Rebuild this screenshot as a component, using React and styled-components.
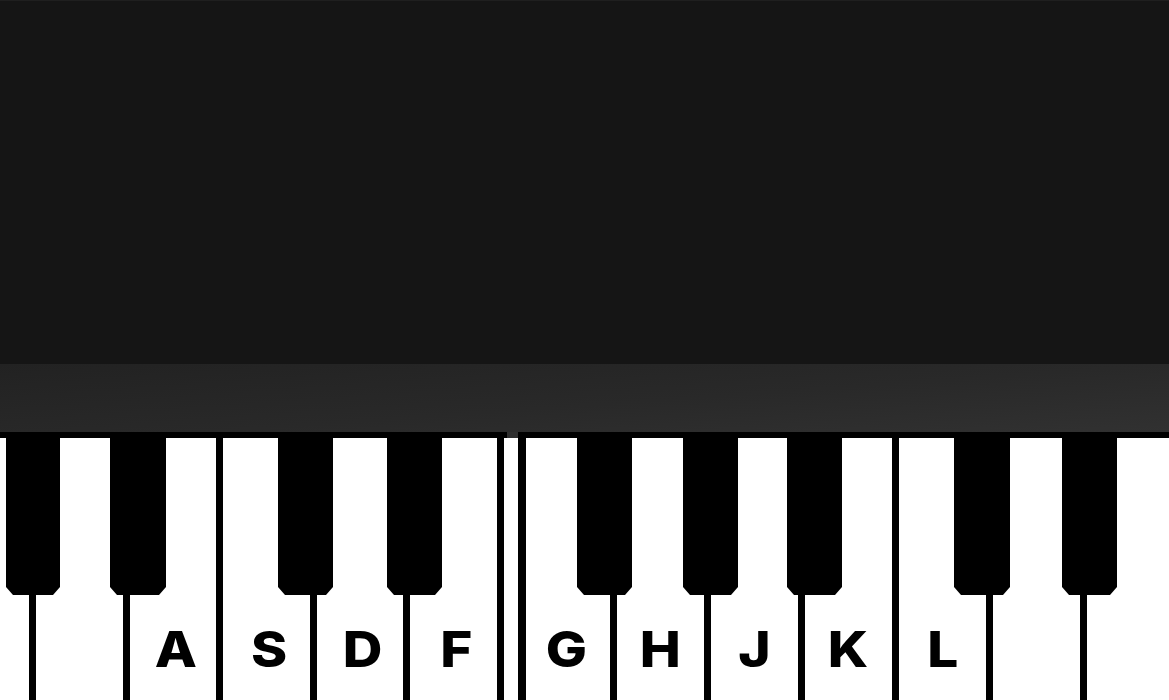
import React from 'react';
import styled, { createGlobalStyle } from 'styled-components';

// two keyboard halves, as in the reference: lower one cut on the left
const sections = [
    {
        id: 'left',
        offset: -57.6,
        keyWidth: 93.6,
        nudge: 6,
        edge: false,
        whites: ['', '', 'A', 'S', 'D', 'F'],
        blacks: [{ left: 6, width: 54 }, { left: 110, width: 56 }, { left: 278, width: 55 }, { left: 387, width: 55 }],
    },
    {
        id: 'right',
        offset: -3,
        keyWidth: 94,
        nudge: 0,
        edge: true,
        whites: ['G', 'H', 'J', 'K', 'L', '', ''],
        blacks: [{ left: 51, width: 55 }, { left: 157, width: 55 }, { left: 261, width: 55 }, { left: 428, width: 56 }, { left: 536, width: 55 }],
    },
];

const App = () => {
    return (
        <>
            <GlobalStyle />
            <Stage>
                <Lid />
                <Rail />
                <KeyRow>
                    {sections.map((section) => (
                        <Section key={section.id} $edge={section.edge}>
                            <WhiteStrip $offset={section.offset}>
                                {section.whites.map((label, index) => (
                                    <WhiteKey key={index} $width={section.keyWidth} $nudge={section.nudge}>
                                        {label && <KeyLabel>{label}</KeyLabel>}
                                    </WhiteKey>
                                ))}
                            </WhiteStrip>
                            {section.blacks.map((black, index) => (
                                <BlackKey key={index} $left={black.left} $width={black.width} />
                            ))}
                        </Section>
                    ))}
                </KeyRow>
            </Stage>
        </>
    );
};

const GlobalStyle = createGlobalStyle`
    html, body {
        margin: 0;
        padding: 0;
        background: #151515;
        overflow: hidden;
    }

    #root {
        width: 1169px;
        height: 700px;
    }
`;

const Stage = styled.div`
    display: flex;
    flex-direction: column;
    width: 1169px;
    height: 700px;
    overflow: hidden;
`;

const Lid = styled.div`
    height: 363px;
    flex-shrink: 0;
    background: #151515;
    border-top: 1px solid #1f1f1f;
`;

const Rail = styled.div`
    height: 68px;
    flex-shrink: 0;
    background: linear-gradient(176deg, #222222 0%, #292929 55%, #313131 100%);
`;

const KeyRow = styled.div`
    display: flex;
    gap: 11px;
    flex: 1;
    background: linear-gradient(#2f2f2f 0 6px, #ffffff 6px);
`;

const Section = styled.div`
    position: relative;
    overflow: hidden;
    background: #ffffff;
    border-top: 6px solid #000;
    border-left: ${(props) => (props.$edge ? '8px solid #000' : 'none')};
    width: ${(props) => (props.$edge ? 'auto' : '507px')};
    flex: ${(props) => (props.$edge ? '1' : 'none')};
`;

const WhiteStrip = styled.div`
    display: flex;
    height: 100%;
    margin-left: ${(props) => props.$offset}px;
`;

const WhiteKey = styled.div`
    box-sizing: border-box;
    flex-shrink: 0;
    width: ${(props) => props.$width}px;
    height: 100%;
    border-right: 7px solid #000;
    display: flex;
    justify-content: center;
    padding-top: 187px;
    padding-left: ${(props) => props.$nudge}px;
`;

const KeyLabel = styled.span`
    font-family: Inter, "DejaVu Sans", sans-serif;
    font-weight: 800;
    font-size: 49px;
    line-height: 1;
    color: #000;
    transform: scaleX(1.12);
`;

const BlackKey = styled.div`
    position: absolute;
    top: 0;
    left: ${(props) => props.$left}px;
    width: ${(props) => props.$width}px;
    height: 157px;
    background: #000;
    clip-path: polygon(0 0, 100% 0, 100% calc(100% - 8px), calc(100% - 7px) 100%, 7px 100%, 0 calc(100% - 8px));
`;

export default App;
